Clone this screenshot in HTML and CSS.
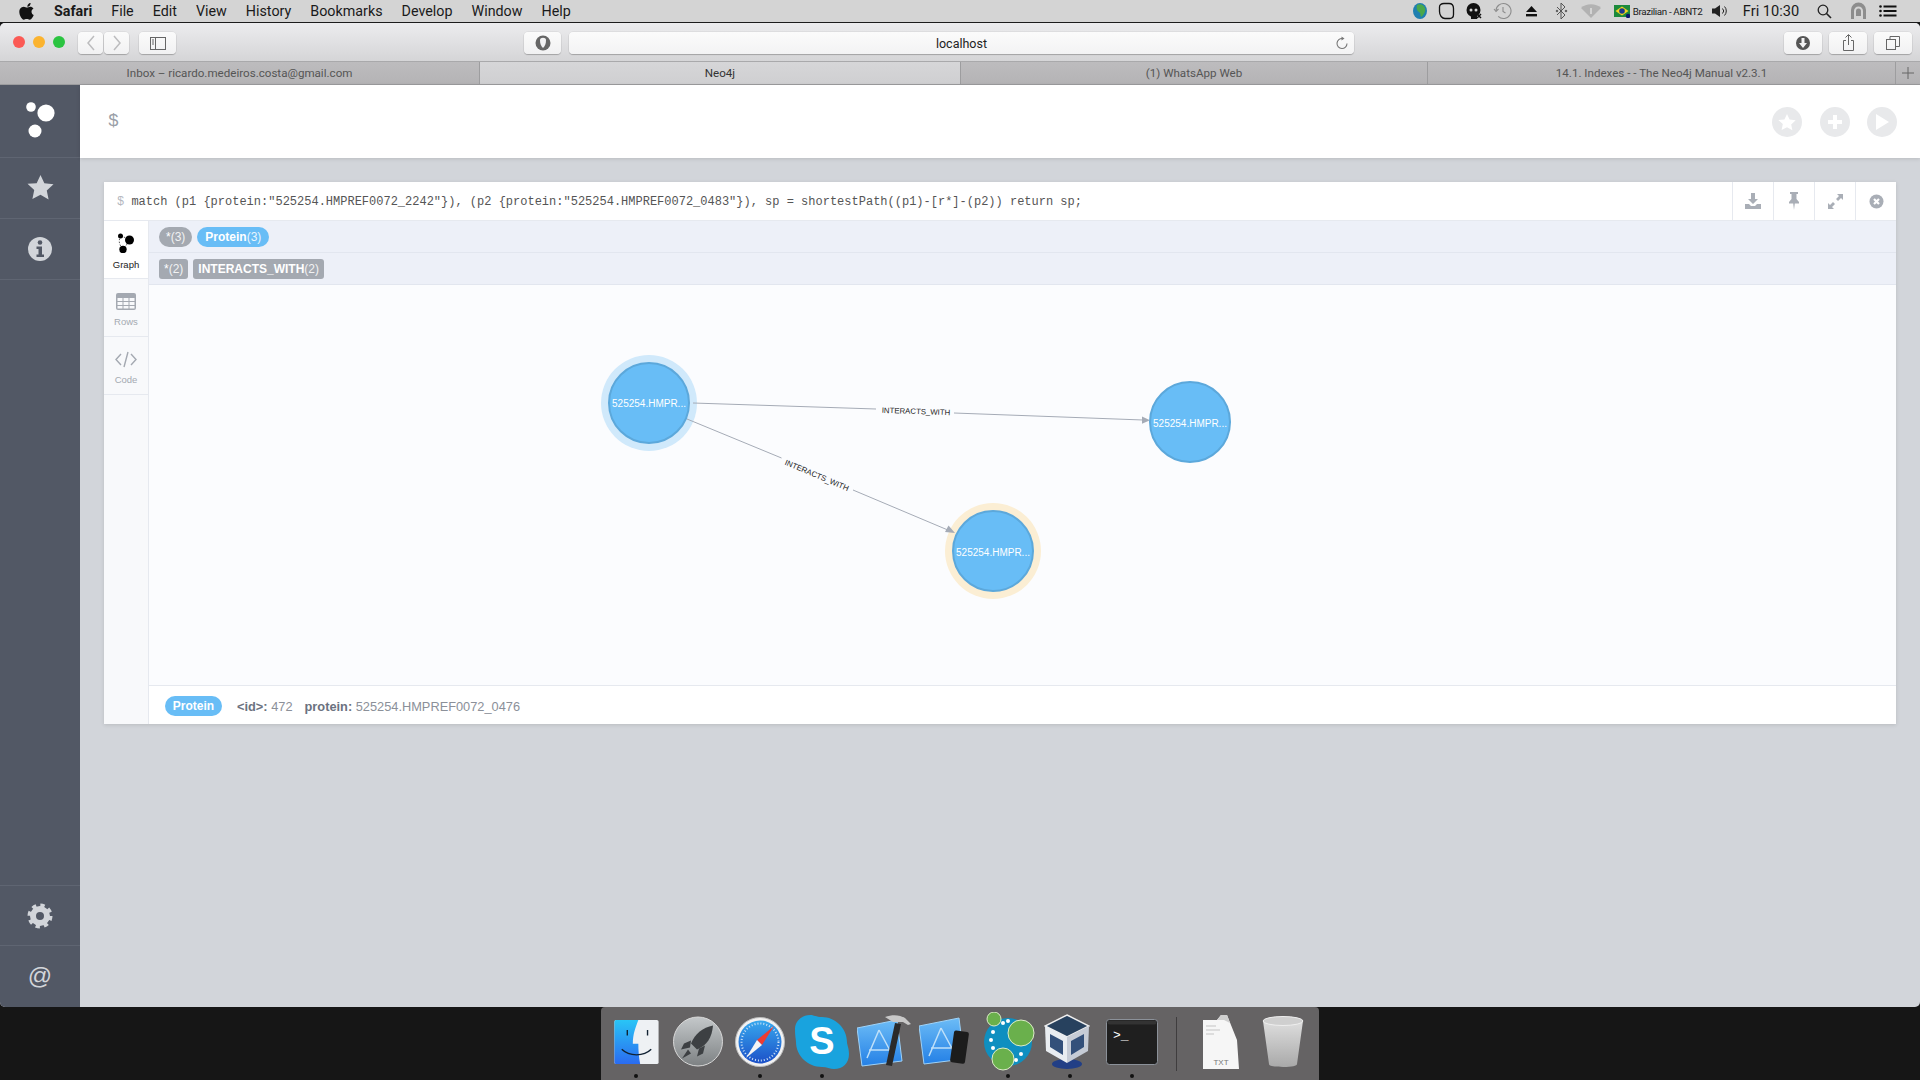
FILE: index.html

```html
<!DOCTYPE html>
<html lang="en">
<head>
  <meta charset="UTF-8">
  <title>Neo4j</title>
  <link rel="stylesheet" href="styles.css">
</head>
<body>
  <!-- mac menu bar -->
  <div class="menubar">
    <svg class="apple" width="16" height="18" viewBox="0 0 16 18"><path d="M11.6 1c.1 1.100-.3 2-.9 2.700-.6.700-1.500 1.200-2.400 1.100-.1-1 .4-2 .9-2.600C9.800 1.500 10.800 1 11.600 1zM14.700 13c-.4 1-.6 1.400-1.100 2.200-.7 1.100-1.700 2.500-3 2.500-1.100 0-1.400-.7-2.900-.7-1.500 0-1.800.7-2.900.7-1.300 0-2.200-1.300-2.900-2.400C.100 12.200-.200 8.700 1.100 6.800c.9-1.300 2.300-2.100 3.700-2.100 1.300 0 2.200.8 3.200.8 1 0 1.600-.8 3.200-.8 1.200 0 2.400.6 3.300 1.700-2.900 1.600-2.400 5.700.2 6.600z" fill="#111"/></svg>
    <span class="menu-app">Safari</span>
    <span class="menu-item">File</span>
    <span class="menu-item">Edit</span>
    <span class="menu-item">View</span>
    <span class="menu-item">History</span>
    <span class="menu-item">Bookmarks</span>
    <span class="menu-item">Develop</span>
    <span class="menu-item">Window</span>
    <span class="menu-item">Help</span>
    <div class="status">
      <svg width="16" height="18" viewBox="0 0 16 18"><ellipse cx="8" cy="9" rx="7" ry="8" fill="#1f7fb0"/><path d="M5 3c3-2 7 0 8 3 1 3-1 7-4 9-1-2 0-4-2-5-2-1-3-4-2-7z" fill="#4aa84a"/></svg>
      <svg width="17" height="18" viewBox="0 0 17 18"><path d="M6 1.500h5c3 0 4.500 2 4.500 5v6c0 2.500-1.500 4-4 4H7c-3 0-5.500-3-5.500-7V5C1.500 3 3 1.500 6 1.500z" fill="none" stroke="#111" stroke-width="1.300"/></svg>
      <svg width="17" height="18" viewBox="0 0 17 18"><circle cx="7.500" cy="8" r="7" fill="#111"/><rect x="5" y="12" width="6" height="5" fill="#111"/><circle cx="5" cy="8" r="1.500" fill="#d4d4d4"/><circle cx="10" cy="8" r="1.500" fill="#d4d4d4"/><path d="M11 12l4 4m0-4l-4 4" stroke="#111" stroke-width="1.500"/></svg>
      <svg width="19" height="18" viewBox="0 0 19 18" fill="none" stroke="#8c8c8c" stroke-width="1.100"><path d="M3 9a7.500 7.500 0 1 1 2.200 5.300"/><path d="M1 7l2 2.500L5.500 7"/><path d="M10 5v4.500l2.500 1.500"/></svg>
      <svg width="13" height="12" viewBox="0 0 13 12"><path d="M6.500 1L12 7H1z" fill="#111"/><rect x="1" y="9" width="11" height="2.400" fill="#111"/></svg>
      <svg width="13" height="18" viewBox="0 0 13 18" fill="none" stroke="#555" stroke-width="1"><path d="M2 5l8 8-4 4V1l4 4-8 8"/><circle cx="2" cy="9" r=".8" fill="#555"/><circle cx="11" cy="9" r=".8" fill="#555"/></svg>
      <svg width="20" height="16" viewBox="0 0 20 16"><path d="M10 15L0 5c5-5 15-5 20 0z" fill="#b2b2b2"/><path d="M10 5v6" stroke="#d4d4d4" stroke-width="2"/></svg>
      <svg width="16" height="13" viewBox="0 0 16 13"><rect width="16" height="12" fill="#1c8a3c"/><path d="M8 1.500L14.500 6 8 10.500 1.500 6z" fill="#f4d31f"/><circle cx="8" cy="6" r="2.800" fill="#1b3a8c"/><circle cx="14" cy="11" r="2.200" fill="#0b1a6a"/></svg>
      <span class="input-name">Brazilian - ABNT2</span>
      <svg width="18" height="14" viewBox="0 0 18 14" fill="none"><path d="M1 4.500h3L9 1v12L4 9.500H1z" fill="#222"/><path d="M11.500 4.500a3.500 3.500 0 0 1 0 5M13.500 2.500a6.500 6.500 0 0 1 0 9" stroke="#222"/></svg>
      <span class="clock">Fri 10:30</span>
      <svg width="15" height="15" viewBox="0 0 15 15" fill="none" stroke="#222" stroke-width="1.300"><circle cx="6" cy="6" r="4.800"/><path d="M9.500 9.500L14 14" stroke-width="1.600"/></svg>
      <svg width="17" height="18" viewBox="0 0 17 18"><path d="M1 17V8a7.500 7.500 0 0 1 15 0v9h-3V9a4.500 4.500 0 0 0-9 0v8z" fill="#8d8d8d"/><path d="M6 14V9a2.500 2.500 0 0 1 5 0v5z" fill="#8d8d8d"/></svg>
      <svg width="18" height="12" viewBox="0 0 18 12"><g fill="#111"><circle cx="1.500" cy="1.500" r="1.300"/><circle cx="1.500" cy="6" r="1.300"/><circle cx="1.500" cy="10.500" r="1.300"/><rect x="4.500" y=".5" width="13" height="2"/><rect x="4.500" y="5" width="13" height="2"/><rect x="4.500" y="9.500" width="13" height="2"/></g></svg>
    </div>
  </div>

  <div class="window">
    <div class="toolbar">
      <div class="traffic">
        <span class="light light-red"></span>
        <span class="light light-yellow"></span>
        <span class="light light-green"></span>
      </div>
      <div class="tb-group">
        <button class="tb-btn tb-nav"><svg width="10" height="16" viewBox="0 0 10 16" fill="none" stroke="#bcbcbe" stroke-width="1.500"><path d="M8 1L2 8l6 7"/></svg></button>
        <button class="tb-btn tb-nav"><svg width="10" height="16" viewBox="0 0 10 16" fill="none" stroke="#bcbcbe" stroke-width="1.500"><path d="M2 1l6 7-6 7"/></svg></button>
      </div>
      <button class="tb-btn tb-side"><svg width="16" height="13" viewBox="0 0 16 13" fill="none" stroke="#666"><rect x=".5" y=".5" width="15" height="12"/><path d="M5.500 .5v12M2 3h2M2 5h2M2 7h2" /></svg></button>
      <button class="tb-btn tb-shield"><svg width="16" height="16" viewBox="0 0 16 16"><circle cx="8" cy="8" r="7.500" fill="#666"/><path d="M5 5c0-3 6-3 6 0 0 4-1 6-3 8-2-2-3-4-3-8z" fill="#f2f2f3"/></svg></button>
      <div class="url">
        <span class="url-text">localhost</span>
        <svg class="reload" width="13" height="14" viewBox="0 0 13 14" fill="none" stroke="#777" stroke-width="1.100"><path d="M7.500 2.500a5 5 0 1 0 4.500 5"/><path d="M6.500 .5l3 2-3 2z" fill="#777" stroke="none"/></svg>
      </div>
      <div class="tb-right">
        <button class="tb-btn tb-action"><svg width="16" height="16" viewBox="0 0 16 16"><circle cx="8" cy="8" r="7" fill="#555"/><path d="M6.500 3h3v5H12l-4 5-4-5h2.500z" fill="#f2f2f3"/></svg></button>
        <button class="tb-btn tb-action"><svg width="13" height="18" viewBox="0 0 13 18" fill="none" stroke="#666"><path d="M4 6.500H1.500v10h10v-10H9M6.500 11V1M3.500 3.500l3-3 3 3"/></svg></button>
        <button class="tb-btn tb-action"><svg width="14" height="14" viewBox="0 0 14 14" fill="none" stroke="#666"><rect x=".5" y="3.500" width="9" height="10"/><path d="M4 3.500V.5h9.500v10h-4"/></svg></button>
      </div>
    </div>

    <div class="tabs">
      <div class="tab tab-first">Inbox – ricardo.medeiros.costa@gmail.com</div>
      <div class="tab tab-active">Neo4j</div>
      <div class="tab tab-third">(1) WhatsApp Web</div>
      <div class="tab tab-fourth">14.1. Indexes - - The Neo4j Manual v2.3.1</div>
      <div class="tab tab-add"><svg width="12" height="12" viewBox="0 0 12 12" stroke="#666"><path d="M6 0v12M0 6h12"/></svg></div>
    </div>

    <div class="app">
      <div class="sidebar">
        <div class="side-item side-logo">
          <svg width="40" height="44" viewBox="0 0 40 44" fill="#fff"><circle cx="11" cy="13" r="4.800"/><circle cx="26" cy="19" r="8.600"/><circle cx="15" cy="37" r="6.500"/></svg>
        </div>
        <div class="side-item side-star">
          <svg width="27" height="26" viewBox="0 0 28 26"><path d="M14 .5l4 8.600 9.500 1.100-7 6.500 1.900 9.300L14 21l-8.400 4.500 1.900-9.300-7-6.500L10 9.100z" fill="#d2d5da"/></svg>
        </div>
        <div class="side-item">
          <svg width="26" height="26" viewBox="0 0 26 26"><circle cx="13" cy="13" r="12" fill="#d2d5da"/><circle cx="13" cy="6.500" r="2.300" fill="#525865"/><path d="M9.500 10.500h5.500v8h2v2.500H9.500v-2.500h2V13h-2z" fill="#525865"/></svg>
        </div>
        <div class="side-spacer"></div>
        <div class="side-item side-bottom">
          <svg width="26" height="26" viewBox="0 0 26 26" fill="none" stroke="#d2d5da"><circle cx="13" cy="13" r="7" stroke-width="6"/><circle cx="13" cy="13" r="10.500" stroke-width="4" stroke-dasharray="4.200 4.050"/></svg>
        </div>
        <div class="side-item side-at">@</div>
      </div>

      <div class="main">
        <div class="editor">
          <span class="editor-prompt">$</span>
          <div class="editor-actions">
            <span class="round-btn"><svg width="18" height="18" viewBox="0 0 28 26"><path d="M14 .5l4 8.600 9.500 1.100-7 6.500 1.900 9.300L14 21l-8.400 4.500 1.900-9.300-7-6.500L10 9.100z" fill="#fff"/></svg></span>
            <span class="round-btn"><svg width="16" height="16" viewBox="0 0 16 16"><path d="M6 1h4v5h5v4h-5v5H6v-5H1V6h5z" fill="#fff"/></svg></span>
            <span class="round-btn"><svg width="16" height="18" viewBox="0 0 16 18"><path d="M2 1l13 8-13 8z" fill="#fff"/></svg></span>
          </div>
        </div>

        <div class="stream">
          <div class="frame">
            <div class="frame-head">
              <div class="frame-query"><span class="frame-prompt">$</span> match (p1 {protein:"525254.HMPREF0072_2242"}), (p2 {protein:"525254.HMPREF0072_0483"}), sp = shortestPath((p1)-[r*]-(p2)) return sp;</div>
              <span class="frame-btn"><svg width="16" height="16" viewBox="0 0 16 16" fill="#a9aeb6"><path d="M6 0h4v6h3l-5 5-5-5h3z"/><path d="M0 11h4l2 2h4l2-2h4v5H0z"/></svg></span>
              <span class="frame-btn"><svg width="12" height="18" viewBox="0 0 12 18" fill="#a9aeb6"><path d="M2 0h8v2H8.500v5l2.500 3v1.500H6.800L6 18l-.8-6.500H1V10l2.500-3V2H2z"/></svg></span>
              <span class="frame-btn"><svg width="15" height="15" viewBox="0 0 15 15" fill="#a9aeb6"><path d="M9 0h6v6l-2-2-3 3-2-2 3-3zM6 15H0V9l2 2 3-3 2 2-3 3z"/></svg></span>
              <span class="frame-btn"><svg width="15" height="15" viewBox="0 0 15 15"><circle cx="7.500" cy="7.500" r="7" fill="#a9aeb6"/><path d="M5 5l5 5m0-5l-5 5" stroke="#fff" stroke-width="2.200"/></svg></span>
            </div>
            <div class="frame-body">
              <div class="rail">
                <div class="rail-item rail-active">
                  <svg width="18" height="20" viewBox="0 0 18 20"><path d="M4 3l8 3M4 3C1 7 2 12 6 16M13 6l-6 10" stroke="#111" stroke-width=".7" stroke-dasharray="1.500 1.500" fill="none"/><circle cx="3.500" cy="3" r="2.500" fill="#000"/><circle cx="12.500" cy="7" r="4.500" fill="#000"/><circle cx="6" cy="16.500" r="3.700" fill="#000"/></svg>
                  <span>Graph</span>
                </div>
                <div class="rail-item">
                  <svg width="20" height="17" viewBox="0 0 20 17"><rect width="20" height="17" rx="2" fill="#a4a9b1"/><g fill="#f8f9fb"><rect x="1.500" y="5" width="5" height="3"/><rect x="7.500" y="5" width="5" height="3"/><rect x="13.500" y="5" width="5" height="3"/><rect x="1.500" y="9" width="5" height="3"/><rect x="7.500" y="9" width="5" height="3"/><rect x="13.500" y="9" width="5" height="3"/><rect x="1.500" y="13" width="5" height="2.500"/><rect x="7.500" y="13" width="5" height="2.500"/><rect x="13.500" y="13" width="5" height="2.500"/></g></svg>
                  <span>Rows</span>
                </div>
                <div class="rail-item">
                  <svg width="22" height="17" viewBox="0 0 22 17" fill="none" stroke="#a4a9b1" stroke-width="1.400"><path d="M6 3L1 8.500 6 14M16 3l5 5.500L16 14M13 1L9 16"/></svg>
                  <span>Code</span>
                </div>
              </div>
              <div class="result">
                <div class="filter-row">
                  <span class="pill pill-gray">*<i>(3)</i></span>
                  <span class="pill pill-blue"><b>Protein</b><i>(3)</i></span>
                </div>
                <div class="filter-row">
                  <span class="tag">*<i>(2)</i></span>
                  <span class="tag"><b>INTERACTS_WITH</b><i>(2)</i></span>
                </div>
                <div class="canvas">
                  <svg class="graph" width="1747" height="400" viewBox="149 285 1747 400">
                    <circle cx="649" cy="403" r="48" fill="#d0e9fb"/>
                    <circle cx="993" cy="551" r="48" fill="#fbeed4"/>
                    <g class="edge">
                      <path d="M693 403L876 409M954 413L1143 420"/>
                      <path d="M1150 420.300L1142 416.500V423.800z" class="arrow"/>
                      <path d="M687 419L781.500 458M853 490L949 530.500"/>
                      <path d="M955 533L948.500 525.500L945 532z" class="arrow"/>
                    </g>
                    <circle cx="649" cy="403" r="40" class="node"/>
                    <circle cx="1190" cy="422" r="40" class="node"/>
                    <circle cx="993" cy="551" r="40" class="node"/>
                    <text x="649" y="407" class="node-label">525254.HMPR...</text>
                    <text x="1190" y="427" class="node-label">525254.HMPR...</text>
                    <text x="993" y="556" class="node-label">525254.HMPR...</text>
                    <text x="916" y="414" class="edge-label" transform="rotate(2 916 411)">INTERACTS_WITH</text>
                    <text x="817" y="478" class="edge-label" transform="rotate(23 817 475)">INTERACTS_WITH</text>
                  </svg>
                </div>
                <div class="statusbar">
                  <span class="pill pill-blue pill-status"><b>Protein</b></span>
                  <span class="prop"><b>&lt;id&gt;:</b> 472</span>
                  <span class="prop"><b>protein:</b> 525254.HMPREF0072_0476</span>
                </div>
              </div>
            </div>
          </div>
        </div>
      </div>
    </div>
  </div>

  <!-- dock -->
  <div class="desktop">
    <div class="dock">
      <div class="dock-icon">
        <svg width="47" height="46" viewBox="0 0 50 50"><defs><linearGradient id="fl" x1="0" y1="0" x2="0" y2="1"><stop offset="0" stop-color="#29c5f6"/><stop offset="1" stop-color="#2a6bf0"/></linearGradient></defs><rect x="1" y="1" width="48" height="48" rx="2" fill="#eef1f4"/><path d="M3 1h24c-3 8-6 15-6 26h6c0 7 .5 14 2 22H3a2 2 0 0 1-2-2V3a2 2 0 0 1 2-2z" fill="url(#fl)"/><path d="M15 12v6M37 12v6" stroke="#123" stroke-width="1.500"/><path d="M9 33c8 8 24 8 32 0" fill="none" stroke="#123" stroke-width="1.500"/></svg>
        <span class="dock-dot"></span>
      </div>
      <div class="dock-icon">
        <svg width="50" height="51" viewBox="0 0 50 50"><defs><linearGradient id="lp" x1="0" y1="0" x2="0" y2="1"><stop offset="0" stop-color="#c4c8ca"/><stop offset="1" stop-color="#7d8183"/></linearGradient></defs><circle cx="25" cy="25" r="24.500" fill="url(#lp)" stroke="#d8d8d8"/><path d="M40 9C30 11 22 17 18 27l6 6c10-4 15-12 16-24z" fill="#3d4043"/><path d="M18 24l-7 3-3 6 9-2zM26 32l-2 8 6-3 2-8zM15 33l-6 9 9-5z" fill="#3d4043"/></svg>
        <span class="dock-dot dock-dot-none"></span>
      </div>
      <div class="dock-icon">
        <svg width="50" height="50" viewBox="0 0 50 50"><defs><linearGradient id="sf" x1="0" y1="0" x2="0" y2="1"><stop offset="0" stop-color="#37a8ee"/><stop offset="1" stop-color="#1c50c8"/></linearGradient></defs><circle cx="25" cy="25" r="24.500" fill="#f2f2f2" stroke="#bbb"/><circle cx="25" cy="25" r="21.500" fill="url(#sf)"/><circle cx="25" cy="25" r="18.500" fill="none" stroke="#cfe4f7" stroke-width="2" stroke-dasharray="1 2"/><path d="M39 9L22 23l5 5z" fill="#ee3b33"/><path d="M11 41l11-18 5 5z" fill="#f4f4f4"/></svg>
        <span class="dock-dot"></span>
      </div>
      <div class="dock-icon">
        <svg width="54" height="56" viewBox="0 0 54 56"><path d="M15 1c4 0 6 2 12 2 13 0 25 11 25 25 0 3 2 6 2 12 0 9-6 15-15 15-4 0-7-2-12-2C13 53 1 42 1 28c0-3-1-5-1-13C0 7 7 1 15 1z" fill="#19a3de"/><text x="27" y="40" class="skype-s">S</text></svg>
        <span class="dock-dot"></span>
      </div>
      <div class="dock-icon">
        <svg width="54" height="56" viewBox="0 0 54 56"><defs><linearGradient id="xc" x1="0" y1="0" x2="0" y2="1"><stop offset="0" stop-color="#6cbcf6"/><stop offset="1" stop-color="#2480e6"/></linearGradient></defs><path d="M0 14l40-8 5 41-40 5z" fill="url(#xc)" stroke="#9fd2f7"/><path d="M22 16L10 44M22 16l14 26M12 36h22" stroke="#bfe0f9" stroke-width="1.500" fill="none"/><path d="M38 9l6 1-9 42-6-1z" fill="#2a2a2a"/><path d="M28 3c8-3 15-2 20 1l6 6-3 1-5-3H36z" fill="#c8c8c8"/></svg>
        <span class="dock-dot dock-dot-none"></span>
      </div>
      <div class="dock-icon">
        <svg width="54" height="50" viewBox="0 0 54 50"><path d="M0 9l40-8 5 41-40 5z" fill="url(#xc)" stroke="#9fd2f7"/><path d="M22 11L10 39M22 11l14 26M12 31h22" stroke="#bfe0f9" stroke-width="1.500" fill="none"/><rect x="33" y="14" width="15" height="32" rx="2" transform="rotate(8 40 30)" fill="#1c1c1c"/></svg>
        <span class="dock-dot dock-dot-none"></span>
      </div>
      <div class="dock-icon">
        <svg width="54" height="60" viewBox="0 0 54 60"><circle cx="27" cy="30" r="24" fill="#0f8fc0"/><g fill="#fff"><circle cx="22" cy="11" r="2"/><circle cx="27" cy="9" r="2"/><circle cx="12" cy="20" r="2"/><circle cx="10" cy="28" r="2"/><circle cx="12" cy="36" r="2"/><circle cx="40" cy="42" r="2"/><circle cx="35" cy="48" r="2"/></g><circle cx="40" cy="21" r="13" fill="#6ab04c" stroke="#dcecc8"/><circle cx="13" cy="7" r="7" fill="#6ab04c" stroke="#dcecc8"/><circle cx="22" cy="47" r="11" fill="#6ab04c" stroke="#dcecc8"/></svg>
        <span class="dock-dot"></span>
      </div>
      <div class="dock-icon dock-vbox">
        <svg width="46" height="56" viewBox="0 0 46 56"><ellipse cx="23" cy="50" rx="15" ry="5" fill="#223f86"/><path d="M23 1l22 11-22 11L1 12z" fill="#27415e" stroke="#eee" stroke-width="1.500"/><path d="M1 12l22 11v26L2 37z" fill="#e9edf1"/><path d="M45 12L23 23v26l21-12z" fill="#c6ccd6"/><path d="M6 20l13 7v14L6 33zM40 20l-13 7v14l13-8z" fill="#33507a"/></svg>
        <span class="dock-dot"></span>
      </div>
      <div class="dock-icon">
        <svg width="52" height="46" viewBox="0 0 52 46"><rect x=".5" y=".5" width="51" height="45" rx="3" fill="#1f1f1f" stroke="#8b9199"/><rect x="1.500" y="1.500" width="49" height="4" rx="2" fill="#333"/><text x="7" y="20" class="term-text">&gt;_</text></svg>
        <span class="dock-dot"></span>
      </div>
      <div class="dock-sep"></div>
      <div class="dock-icon">
        <svg width="38" height="56" viewBox="0 0 38 56"><path d="M1 6h14l4-5h6l10 25 2 29H1z" fill="#f6f6f6"/><path d="M15 6l4-5h6l3 8-6-3z" fill="#cfcfcf"/><path d="M4 12h10M4 16h14M4 20h8" stroke="#ddd" stroke-width="2"/><text x="19" y="51" class="txt-label">TXT</text></svg>
        <span class="dock-dot dock-dot-none"></span>
      </div>
      <div class="dock-icon">
        <svg width="42" height="52" viewBox="0 0 42 52"><defs><linearGradient id="tr" x1="0" y1="0" x2="0" y2="1"><stop offset="0" stop-color="#dedede"/><stop offset="1" stop-color="#a9a9a9"/></linearGradient></defs><path d="M1 5l6 43c0 2 5 3 14 3s14-1 14-3l6-43z" fill="url(#tr)"/><ellipse cx="21" cy="5" rx="20" ry="4.500" fill="#cfcfcf" stroke="#eee"/></svg>
        <span class="dock-dot dock-dot-none"></span>
      </div>
    </div>
  </div>
</body>
</html>
```

FILE: styles.css

```css
* {
  box-sizing: border-box;
}
html, body {
  margin: 0;
  padding: 0;
  height: 1080px;
  overflow: hidden;
}
body {
  display: flex;
  flex-direction: column;
  background: #161616;
  font-family: "Liberation Sans", sans-serif;
  color: #222;
}

/* menu bar */
.menubar {
  height: 23px;
  flex: none;
  display: flex;
  align-items: center;
  background: #d4d4d4;
  border-bottom: 1px solid #1c1c1c;
  padding-left: 19px;
  font-family: "Roboto", sans-serif;
  font-size: 14.3px;
  color: #1a1a1a;
}
.apple {
  margin-right: 19px;
}
.menu-app {
  font-weight: 700;
  margin-right: 19px;
}
.menu-item {
  margin-right: 19px;
}
.status {
  margin-left: auto;
  display: grid;
  grid-template-columns: 26px 26px 30px 26px 32px 28px 32px 30px 61px 44px 58px 48px 20px 40px;
  align-items: center;
  justify-items: center;
  padding-right: 12px;
}
.status svg {
  display: block;
}
.input-name {
  font-size: 9.8px;
  letter-spacing: -0.35px;
  white-space: nowrap;
}
.clock {
  font-size: 14.6px;
  white-space: nowrap;
}

/* window */
.window {
  height: 984px;
  flex: none;
  display: flex;
  flex-direction: column;
  border-radius: 5px;
  overflow: hidden;
  background: #d2d5da;
}
.toolbar {
  height: 38px;
  flex: none;
  display: flex;
  align-items: center;
  padding: 2px 8px 0 13px;
  background: linear-gradient(#ececee, #d5d5d7);
}
.traffic {
  display: flex;
  gap: 8px;
  margin: 0 13px 2px 0;
}
.light {
  width: 12px;
  height: 12px;
  border-radius: 50%;
}
.light-red { background: #fb5a55; }
.light-yellow { background: #fbb32f; }
.light-green { background: #2bc441; }
.tb-group {
  display: flex;
  gap: 1px;
  margin-right: 10px;
}
.tb-btn {
  height: 22px;
  padding: 0;
  display: flex;
  align-items: center;
  justify-content: center;
  background: linear-gradient(#fbfbfb, #f1f1f2);
  border: none;
  border-radius: 4px;
  box-shadow: 0 1px 1px rgba(0,0,0,0.22), 0 0 0 0.5px rgba(0,0,0,0.08);
}
.tb-nav { width: 25px; }
.tb-side { width: 37px; margin-right: 348px; }
.tb-shield { width: 37px; margin-right: 8px; }
.url {
  width: 785px;
  height: 22px;
  position: relative;
  display: flex;
  align-items: center;
  justify-content: center;
  background: linear-gradient(#fbfbfb, #f3f3f4);
  border-radius: 4px;
  box-shadow: 0 1px 1px rgba(0,0,0,0.22), 0 0 0 0.5px rgba(0,0,0,0.08);
  font-family: "Roboto", sans-serif;
  font-size: 12.5px;
  color: #222;
}
.reload {
  position: absolute;
  right: 6px;
  top: 4px;
}
.tb-right {
  margin-left: auto;
  display: flex;
  gap: 7px;
}
.tb-action { width: 38px; }

/* tabs */
.tabs {
  height: 24px;
  flex: none;
  display: flex;
  background: linear-gradient(#bdbcbe, #b4b3b5);
  border-top: 1px solid #a9a9ab;
  border-bottom: 1px solid #9c9c9e;
  font-family: "Roboto", sans-serif;
  font-size: 11.6px;
  color: #555;
}
.tab {
  display: flex;
  align-items: center;
  justify-content: center;
  border-right: 1px solid #9d9d9f;
  white-space: nowrap;
}
.tab-first { width: 480px; }
.tab-active {
  width: 481px;
  background: linear-gradient(#d6d6d8, #cfcfd1);
  color: #333;
}
.tab-third { width: 467px; }
.tab-fourth { width: 468px; }
.tab-add {
  flex: 1;
  border-right: none;
}

/* neo4j browser */
.app {
  flex: 1;
  display: flex;
  min-height: 0;
}
.sidebar {
  width: 80px;
  flex: none;
  display: flex;
  flex-direction: column;
  background: #525865;
}
.side-item {
  height: 61px;
  flex: none;
  display: flex;
  align-items: center;
  justify-content: center;
  border-bottom: 1px solid #5f6572;
  color: #d2d5da;
}
.side-logo {
  height: 73px;
  padding-bottom: 11px;
}
.side-star {
  padding-bottom: 2px;
}
.side-spacer {
  flex: 1;
}
.side-bottom {
  border-top: 1px solid #5f6572;
}
.side-at {
  border-bottom: none;
  font-size: 24px;
  padding-bottom: 2px;
}
.main {
  flex: 1;
  display: flex;
  flex-direction: column;
  min-width: 0;
}
.editor {
  height: 73px;
  flex: none;
  display: flex;
  align-items: center;
  justify-content: space-between;
  padding: 0 23px 0 28px;
  background: #fff;
  box-shadow: 0 1px 4px rgba(0,0,0,0.12);
  position: relative;
}
.editor-prompt {
  font-family: "Liberation Mono", monospace;
  font-size: 18px;
  color: #9a9fa8;
  margin-bottom: 2px;
}
.editor-actions {
  display: flex;
  gap: 17.500px;
}
.round-btn {
  width: 30px;
  height: 30px;
  border-radius: 50%;
  background: #e8e9eb;
  display: flex;
  align-items: center;
  justify-content: center;
}
.stream {
  flex: 1;
  padding: 24px;
}
.frame {
  height: 542px;
  display: flex;
  flex-direction: column;
  background: #fff;
  box-shadow: 0 1px 4px rgba(0,0,0,0.12);
}
.frame-head {
  height: 39px;
  flex: none;
  display: flex;
  align-items: stretch;
  border-bottom: 1px solid #e6e9ef;
}
.frame-query {
  flex: 1;
  align-self: center;
  padding: 2px 0 0 13px;
  font-family: "Liberation Mono", monospace;
  font-size: 12px;
  color: #555;
  white-space: nowrap;
}
.frame-prompt {
  color: #b4b8bf;
}
.frame-btn {
  width: 41px;
  display: flex;
  align-items: center;
  justify-content: center;
  border-left: 1px solid #e6e9ef;
}
.frame-body {
  flex: 1;
  display: flex;
  min-height: 0;
}
.rail {
  width: 45px;
  flex: none;
  background: #f8f9fb;
  border-right: 1px solid #e6e9ef;
}
.rail-item {
  height: 58px;
  display: flex;
  flex-direction: column;
  align-items: center;
  justify-content: center;
  gap: 6px;
  padding-top: 4px;
  border-bottom: 1px solid #e6e9ef;
  font-size: 9.500px;
  color: #a4a9b1;
}
.rail-item svg {
  display: block;
}
.rail-active {
  background: #fff;
  color: #222;
}
.result {
  flex: 1;
  display: flex;
  flex-direction: column;
  min-width: 0;
}
.filter-row {
  height: 32px;
  flex: none;
  display: flex;
  align-items: center;
  gap: 5px;
  padding-left: 10px;
  background: #edf0f8;
  border-bottom: 1px solid #e2e6ef;
}
.pill, .tag {
  height: 20px;
  display: flex;
  align-items: center;
  padding: 0 7px;
  color: #fff;
  font-size: 12px;
  background: #a4a9b1;
}
.pill {
  border-radius: 10px;
}
.tag {
  border-radius: 3px;
  padding: 0 5px;
}
.pill i, .tag i {
  font-style: normal;
  opacity: 0.85;
}
.pill-blue {
  background: #68bdf6;
  padding: 0 8px;
}
.canvas {
  flex: 1;
  min-height: 0;
  background: #fbfcfe;
}
.graph {
  display: block;
}
.node {
  fill: #68bdf6;
  stroke: #5ca8db;
  stroke-width: 2;
}
.node-label {
  fill: #fff;
  font-size: 10px;
  text-anchor: middle;
}
.edge path {
  fill: none;
  stroke: #a5abb6;
  stroke-width: 1;
}
.edge .arrow {
  fill: #a5abb6;
  stroke: none;
}
.edge-label {
  fill: #222;
  font-size: 7.800px;
  text-anchor: middle;
}
.statusbar {
  height: 39px;
  flex: none;
  display: flex;
  align-items: center;
  padding: 2px 0 0 16px;
  border-top: 1px solid #e6e9ef;
  background: #fff;
  font-size: 12.800px;
  color: #8b9099;
}
.pill-status {
  width: 57px;
  justify-content: center;
  margin-right: 15px;
}
.prop {
  margin-right: 12px;
}
.prop b {
  color: #6b7280;
}

/* dock */
.desktop {
  flex: 1;
  display: flex;
  justify-content: center;
}
.dock {
  width: 718px;
  display: flex;
  align-items: flex-start;
  padding-left: 4px;
  background: #656364;
  border-radius: 4px 4px 0 0;
}
.dock-icon {
  position: relative;
  height: 73px;
  width: 62px;
  flex: none;
  display: flex;
  align-items: center;
  justify-content: center;
  padding-bottom: 4px;
}
.dock-vbox svg {
  margin-right: 6px;
}
.dock-dot {
  position: absolute;
  bottom: 2px;
  left: 29px;
  width: 4px;
  height: 4px;
  border-radius: 50%;
  background: #111;
}
.dock-dot-none {
  display: none;
}
.dock-sep {
  width: 1px;
  height: 54px;
  margin: 10px 13px 0;
  background: #3f3d3e;
}
.skype-s {
  fill: #fff;
  font-family: "Liberation Sans", sans-serif;
  font-weight: 700;
  font-size: 38px;
  text-anchor: middle;
}
.term-text {
  fill: #fff;
  font-family: "Liberation Mono", monospace;
  font-size: 13px;
}
.txt-label {
  fill: #777;
  font-size: 8px;
  text-anchor: middle;
}
```
